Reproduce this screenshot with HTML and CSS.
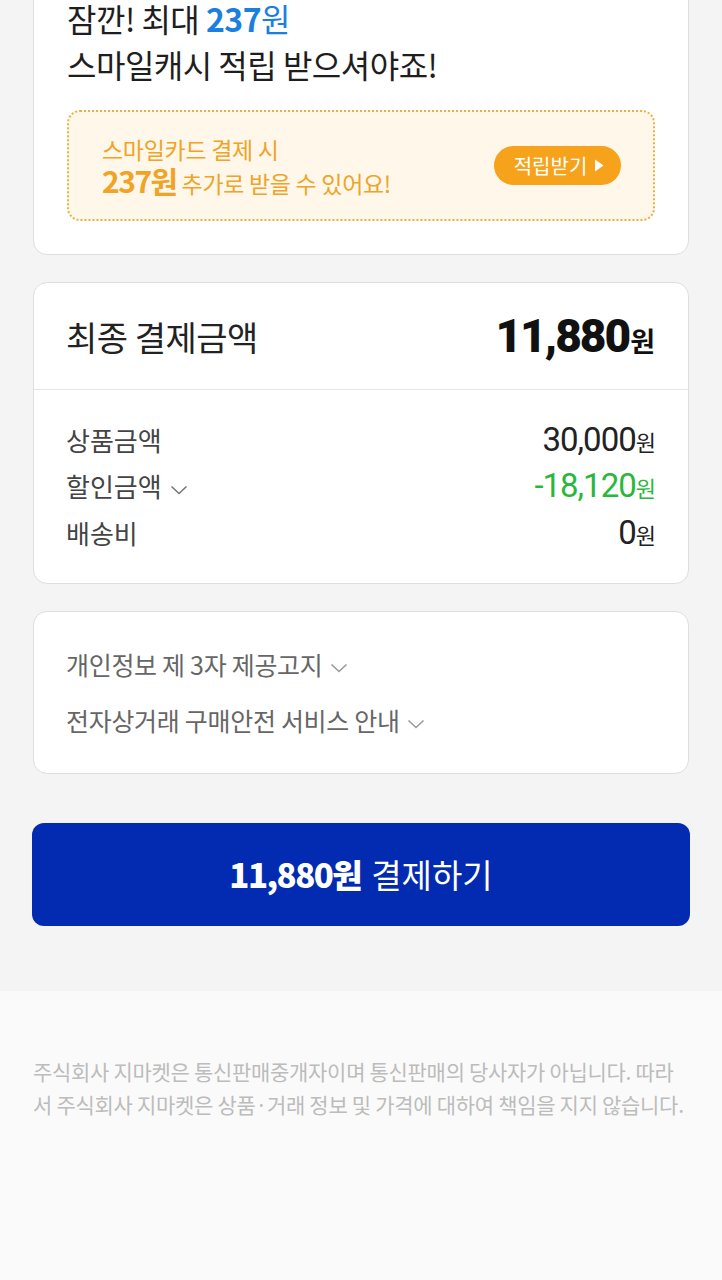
FILE: index.html
```html
<!DOCTYPE html>
<html>
<head>
	<meta name="viewport" content="width=device-width, initial-scale=1">
	<title>결제</title>
	<link rel="stylesheet" href="styles.css">
</head>
<body>

<div class="page">

	<div class="card promo">
		<p class="promo_title">잠깐! 최대 <b class="blue">237</b><span class="blue">원</span></p>
		<p class="promo_title">스마일캐시 적립 받으셔야죠!</p>

		<div class="smile_box">
			<div class="smile_text">
				<p class="smile_line">스마일카드 결제 시</p>
				<p class="smile_line"><b class="smile_num">237원</b> 추가로 받을 수 있어요!</p>
			</div>
			<div class="smile_btn">적립받기
				<svg width="10" height="13" viewBox="0 0 10 13"><path d="M1 0.5 L9.5 6.5 L1 12.5 Z" fill="#fff"/></svg>
			</div>
		</div>
	</div>

	<div class="card total">
		<div class="total_head">
			<span class="total_label">최종 결제금액</span>
			<span class="total_price"><b>11,880</b><span class="won">원</span></span>
		</div>
		<div class="total_body">
			<div class="row">
				<span>상품금액</span>
				<span class="amount">30,000<span class="won_s">원</span></span>
			</div>
			<div class="row">
				<span>할인금액
					<svg class="chev" width="18" height="10" viewBox="0 0 18 10"><path d="M1.5 1.5 L9 8.5 L16.5 1.5" fill="none" stroke="#777" stroke-width="1.6"/></svg>
				</span>
				<span class="amount green">-18,120<span class="won_s">원</span></span>
			</div>
			<div class="row">
				<span>배송비</span>
				<span class="amount">0<span class="won_s">원</span></span>
			</div>
		</div>
	</div>

	<div class="card notice">
		<div class="notice_item">개인정보 제 3자 제공고지
			<svg class="chev" width="18" height="10" viewBox="0 0 18 10"><path d="M1.5 1.5 L9 8.5 L16.5 1.5" fill="none" stroke="#999" stroke-width="1.6"/></svg>
		</div>
		<div class="notice_item">전자상거래 구매안전 서비스 안내
			<svg class="chev" width="18" height="10" viewBox="0 0 18 10"><path d="M1.5 1.5 L9 8.5 L16.5 1.5" fill="none" stroke="#999" stroke-width="1.6"/></svg>
		</div>
	</div>

	<div class="pay_btn"><b class="pay_num">11,880원</b> 결제하기</div>

</div>

<div class="footer">
	<p>주식회사 지마켓은 통신판매중개자이며 통신판매의 당사자가 아닙니다. 따라서 주식회사 지마켓은 상품·거래 정보 및 가격에 대하여 책임을 지지 않습니다.</p>
</div>

</body>
</html>
```

FILE: styles.css
```css
body{
	margin: 0;
	padding: 0;
	background-color: #f4f4f4;
	font-family: "Noto Sans CJK KR", "Noto Sans", sans-serif;
	color: #222;
	overflow: hidden;
}
p{
	margin: 0;
}
.page{
	padding: 0 33px 65px 33px;
}

.card{
	background-color: white;
	border: 1px solid #dedede;
	border-radius: 14px;
	margin-bottom: 27px;
}

/* smile cash promo */
.promo{
	margin-top: -41px;
	padding: 35px 33px 33px 33px;
}
.promo_title{
	font-size: 32px;
	line-height: 46px;
	color: #1e1e1e;
	letter-spacing: -0.5px;
}
.blue{
	color: #1a80e0;
}
.promo_title b{
	font-weight: bold;
}
.smile_box{
	margin-top: 23px;
	height: 111px;
	box-sizing: border-box;
	border: 2px dotted #e2b54a;
	border-radius: 13px;
	background-color: #fff8ea;
	padding: 0 32px 0 33px;
	display: flex;
	align-items: center;
	justify-content: space-between;
}
.smile_line{
	font-size: 23px;
	line-height: 32px;
	color: #f0a326;
	letter-spacing: -0.3px;
}
.smile_num{
	display: inline-block;
	font-size: 30px;
	line-height: 30px;
	font-weight: bold;
	letter-spacing: -1.5px;
}
.smile_btn{
	background-color: #f7a21b;
	color: white;
	font-size: 20px;
	height: 39px;
	width: 127px;
	border-radius: 20px;
	display: flex;
	align-items: center;
	justify-content: center;
	gap: 7px;
	box-sizing: border-box;
	padding-left: 3px;
}

/* final price */
.total_head{
	height: 106px;
	padding: 0 33px 0 32px;
	display: flex;
	align-items: center;
	justify-content: space-between;
	border-bottom: 1px solid #e4e4e4;
}
.total_label{
	font-size: 34px;
	color: #222;
	letter-spacing: -0.5px;
}
.total_price{
	color: #111;
}
.total_price b{
	font-size: 46px;
	font-weight: 900;
	letter-spacing: -2px;
	font-family: "Roboto", "Noto Sans CJK KR", sans-serif;
}
.won{
	font-size: 27px;
	font-weight: bold;
	margin-left: 1px;
}
.total_body{
	padding: 26px 33px 27px 32px;
}
.row{
	display: flex;
	justify-content: space-between;
	align-items: center;
	height: 46.5px;
	font-size: 26px;
	color: #444;
}
.chev{
	margin-left: 2px;
	vertical-align: middle;
}
.amount{
	font-size: 33px;
	color: #222;
	letter-spacing: -1px;
	font-family: "Roboto", "Noto Sans CJK KR", sans-serif;
}
.won_s{
	font-size: 22px;
	font-family: "Noto Sans CJK KR", sans-serif;
}
.green{
	color: #2ab83c;
}

/* notices */
.notice{
	padding: 24px 33px 25px 32px;
	margin-bottom: 49px;
}
.notice_item{
	font-size: 25px;
	line-height: 56px;
	color: #666;
	letter-spacing: -0.3px;
}

/* pay button */
.pay_btn{
	height: 103px;
	margin: 0 -1px;
	background-color: #022bb2;
	border-radius: 12px;
	display: flex;
	align-items: center;
	justify-content: center;
	color: white;
	font-size: 33px;
	gap: 10px;
}
.pay_num{
	font-size: 33px;
	font-weight: 900;
	letter-spacing: -1.5px;
}

/* footer */
.footer{
	background-color: #fafafa;
	padding: 64px 33px 0 33px;
	height: 400px;
}
.footer p{
	font-size: 21px;
	line-height: 33px;
	color: #bcbcbc;
	letter-spacing: -0.3px;
}
```
